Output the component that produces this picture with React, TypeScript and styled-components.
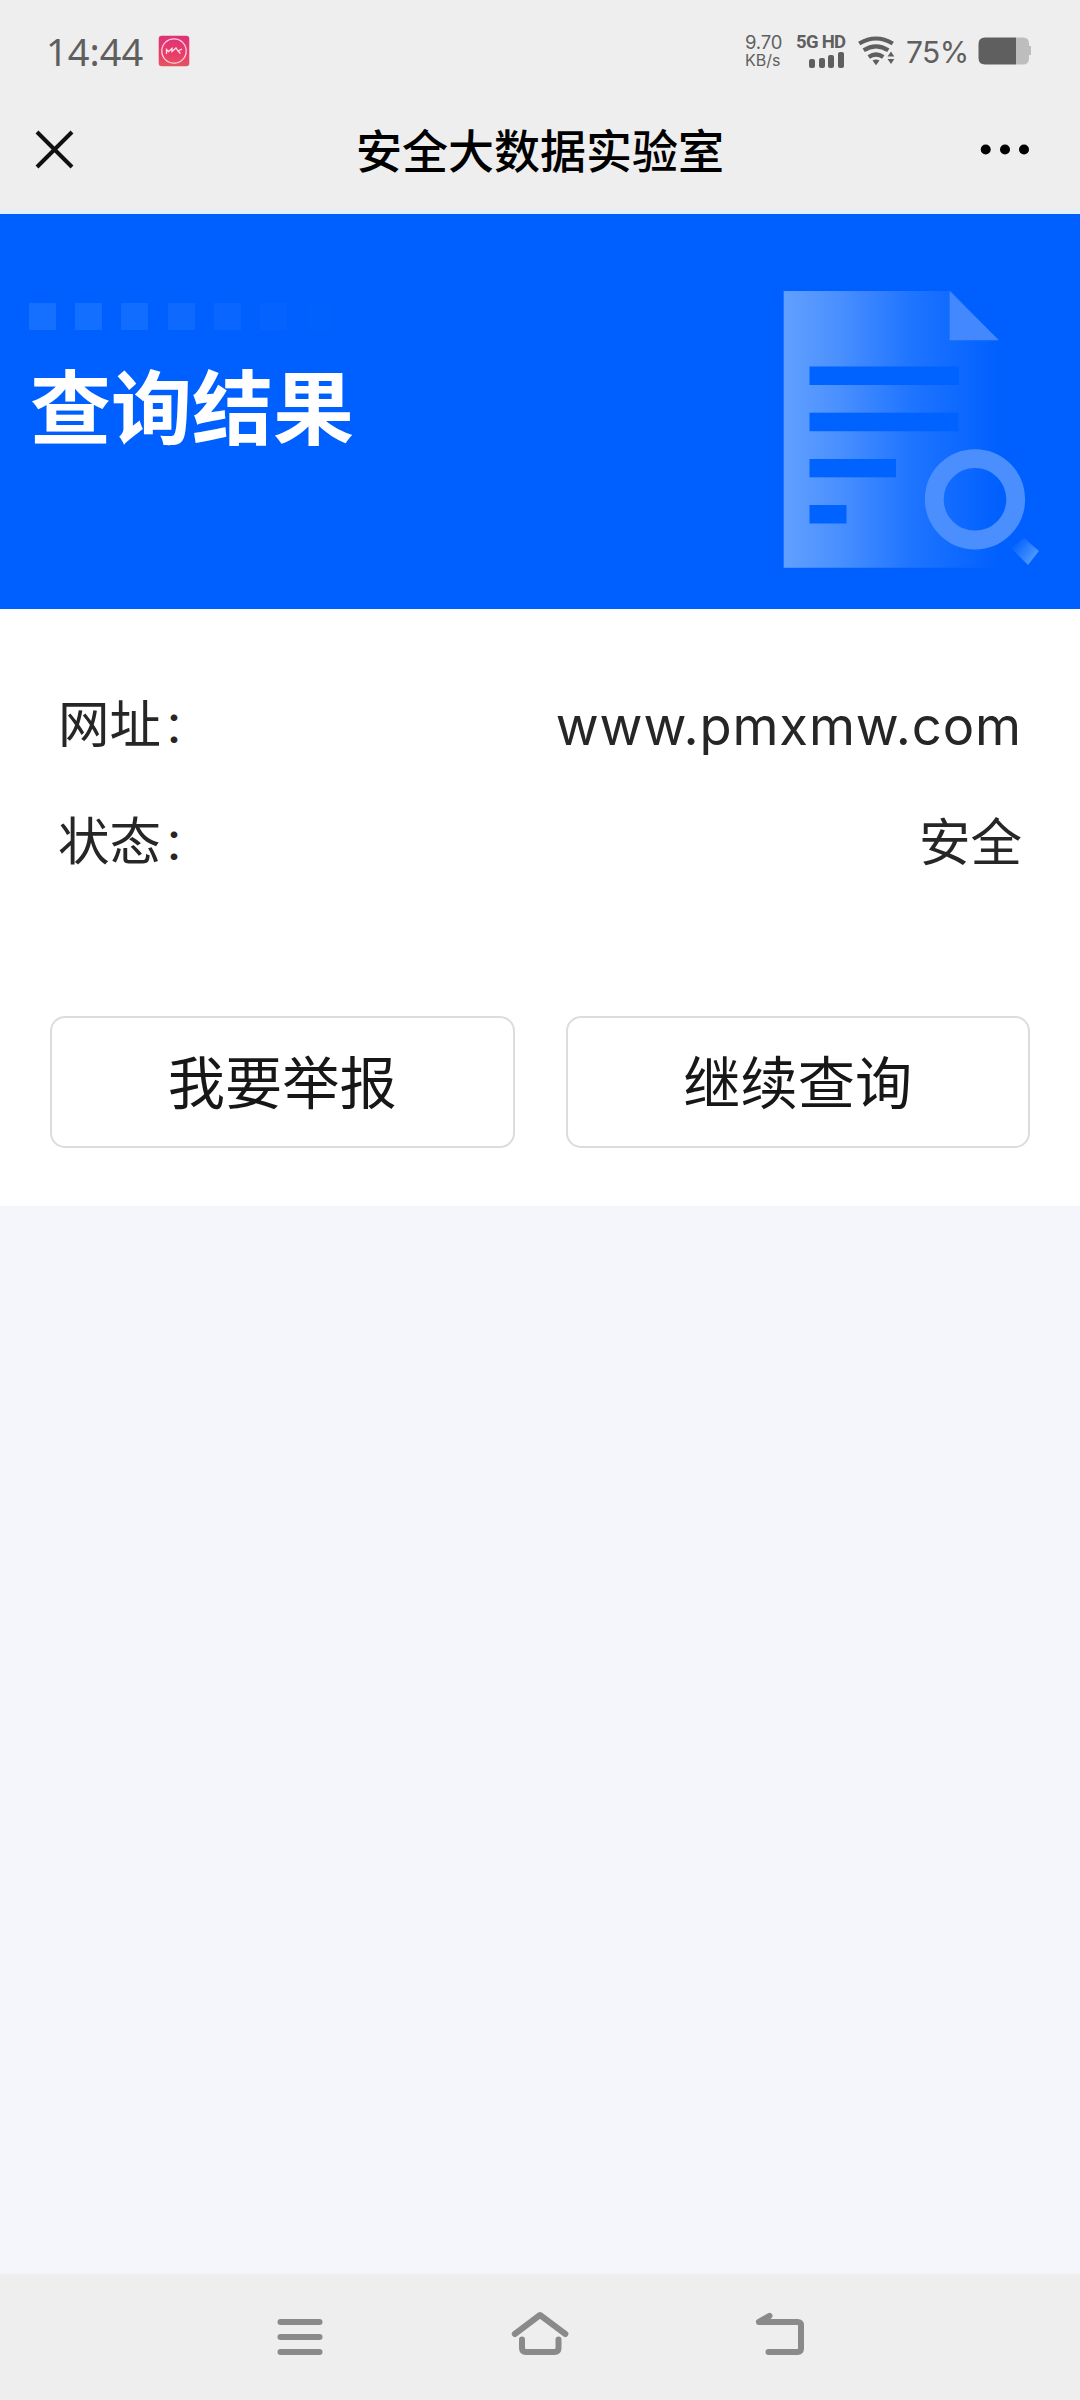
import React from "react";
import styled, { createGlobalStyle } from "styled-components";

const cjk = `"Noto Sans CJK SC", sans-serif`;

const GlobalStyle = createGlobalStyle`
  * { box-sizing: border-box; }
  body { margin: 0; background: #f4f6fb; font-family: ${cjk}; }
  button { font: inherit; border: 0; padding: 0; background: none; }
`;

const Screen = styled.div`
  width: 1080px;
  height: 2400px;
  display: flex;
  flex-direction: column;
  background: #f4f6fb;
  overflow: hidden;
`;

const Header = styled.header`
  height: 214px;
  background: #eeeeee;
  border-bottom: 5px solid #e4eff8;
  color: #5f5f5f;
`;

const StatusBar = styled.div`
  height: 102px;
  padding: 0 48px 0 46px;
  display: flex;
  align-items: center;
  justify-content: space-between;
`;

const StatusGroup = styled.div`
  display: flex;
  align-items: center;
`;

const Clock = styled.span`
  width: 112px;
  font: 400 38px/40px "Noto Sans", sans-serif;
`;

const Speed = styled.div`
  width: 51px;
  display: flex;
  flex-direction: column;
  gap: 2px;
  font-family: Inter, sans-serif;
  white-space: nowrap;
`;

const SpeedLine = styled.span<{ $size: number; $gap: number }>`
  font-size: ${(p) => p.$size}px;
  line-height: 16px;
  letter-spacing: ${(p) => p.$gap}px;
`;

const Network = styled.div`
  width: 61px;
  display: flex;
  flex-direction: column;
`;

const NetworkLabel = styled.span`
  font: 700 18.5px/16px Roboto, sans-serif;
  letter-spacing: -0.7px;
  white-space: nowrap;
`;

const SignalBars = styled.div`
  height: 18px;
  display: flex;
  align-items: flex-end;
  gap: 3.6px;
  padding-left: 13px;
`;

const SignalBar = styled.span<{ $height: number }>`
  width: 6px;
  height: ${(p) => p.$height}px;
  border-radius: 2px;
  background: #5f5f5f;
`;

const Percent = styled.span`
  width: 83px;
  padding: 2px 0 0 11px;
  font: 400 30px/36px Inter, sans-serif;
  letter-spacing: -0.6px;
`;

const Drawing = styled.svg`
  display: block;
  flex: none;
`;

const TitleBar = styled.div`
  height: 96px;
  padding: 0 30px;
  display: flex;
  align-items: center;
  justify-content: space-between;
`;

const Title = styled.h1`
  margin: 0;
  padding-bottom: 4px;
  font: 500 46px/60px ${cjk};
  color: #000;
`;

const BarButton = styled.button`
  width: 70px;
  height: 50px;
  display: flex;
  align-items: center;
`;

const Banner = styled.section`
  height: 395px;
  padding: 76px 40px 0 29px;
  display: flex;
  justify-content: space-between;
  background: #0060ff;
`;

const BannerText = styled.div`
  padding-top: 13px;
`;

const Squares = styled.div`
  display: flex;
  gap: 19.2px;
`;

const Square = styled.span<{ $alpha: number }>`
  width: 27px;
  height: 27px;
  background: rgba(70, 150, 255, ${(p) => p.$alpha});
`;

const Heading = styled.h2`
  margin: 15px 0 0 1px;
  font: 700 81px/116px ${cjk};
  color: #fff;
`;

const Panel = styled.section`
  height: 597px;
  padding: 58px 50px 0;
  background: #fff;
`;

const Row = styled.div`
  height: 117px;
  padding: 0 8px;
  display: flex;
  align-items: center;
  justify-content: space-between;
  color: #262626;
`;

const Label = styled.span`
  padding-bottom: 7px;
  font: 400 51.5px/74px ${cjk};
`;

const Colon = styled.span`
  margin-left: 2px;
  font-size: 44px;
`;

const Value = styled.span`
  padding-bottom: 7px;
  font: 400 51.5px/74px ${cjk};
`;

const UrlValue = styled.span`
  font: 400 52.5px/74px Inter, sans-serif;
  letter-spacing: 0.9px;
`;

const Actions = styled.div`
  display: grid;
  grid-template-columns: 1fr 1fr;
  gap: 51px;
  margin-top: 115px;
`;

const ActionButton = styled.button`
  height: 132px;
  padding-bottom: 7px;
  border: 2px solid #dcdcdc;
  border-radius: 15px;
  background: #fff;
  color: #171717;
  font: 400 57.2px/82px ${cjk};
`;

const Blank = styled.div`
  flex: 1;
`;

const SystemNav = styled.nav`
  height: 126px;
  padding: 36px 270px 0;
  display: flex;
  justify-content: space-between;
  background: #eeeeee;
`;

const squares = [0.3, 0.27, 0.24, 0.2, 0.13, 0.05, 0.02];
const signal = [9, 10, 13, 16];

function AppBadge() {
  return (
    <Drawing width="32" height="32" viewBox="0 0 32 32">
      <defs>
        <linearGradient id="badge" x1="0" y1="0" x2="0" y2="1">
          <stop offset="0" stopColor="#dc3378" />
          <stop offset="0.6" stopColor="#e93c69" />
          <stop offset="1" stopColor="#e35561" />
        </linearGradient>
      </defs>
      <rect x="0.7" y="0.7" width="30.6" height="30.6" rx="3" fill="url(#badge)" />
      <circle cx="16" cy="16" r="12.2" fill="none" stroke="#ffd0dc" strokeWidth="1.3" />
      <path d="M8.500 19V14.500L10.500 16.500L14 13.500V16.500L18 13L20 16L24 14M19.500 15.500L22.500 18.500" fill="none" stroke="#ffe3ea" strokeWidth="1.3" />
    </Drawing>
  );
}

function WifiIcon() {
  return (
    <Drawing width="38" height="32" viewBox="857 36 38 32">
      <g fill="none" stroke="#5f5f5f" strokeWidth="4.200">
        <path d="M859.200 44.500Q876 34.500 892.800 44.500" />
        <path d="M863.700 51.300Q876 43.300 888.300 51.300" />
        <path d="M868.700 58Q876 53 883.300 58" />
      </g>
      <path d="M872.500 61.600Q876 59.400 879.500 61.600L876 66.200Z" fill="#5f5f5f" />
      <path d="M887.500 57.500L891 52.500L894.300 57.500ZM887.500 60L891 65L894.300 60Z" fill="#5f5f5f" />
    </Drawing>
  );
}

function BatteryIcon() {
  return (
    <Drawing width="54" height="28" viewBox="0 0 54 28">
      <path d="M38 0.500H45Q51 0.500 51 6.500V9H53V18H51V21.500Q51 27.500 45 27.500H38Z" fill="#bdbdbd" />
      <path d="M38 0.500H7Q0.500 0.500 0.500 7V21Q0.500 27.500 7 27.500H38Z" fill="#5f5f5f" />
    </Drawing>
  );
}

function ReportArt() {
  return (
    <Drawing width="260" height="280" viewBox="780 290 260 280">
      <defs>
        <linearGradient id="page" x1="0" y1="0" x2="1" y2="0">
          <stop offset="0" stopColor="#62a0ff" />
          <stop offset="0.25" stopColor="#4a90ff" />
          <stop offset="0.6" stopColor="#1e74ff" />
          <stop offset="1" stopColor="#0060ff" />
        </linearGradient>
        <linearGradient id="handle" gradientUnits="userSpaceOnUse" x1="1014" y1="542" x2="1034" y2="558">
          <stop offset="0" stopColor="#0060ff" />
          <stop offset="1" stopColor="#4c96ff" />
        </linearGradient>
      </defs>
      <path d="M783.700 291H951L999 340V567.700H783.700Z" fill="url(#page)" />
      <path d="M949.600 291V340.300H999Z" fill="#4388ff" />
      <g fill="#0062ff">
        <rect x="809.500" y="366.500" width="149.500" height="18.500" />
        <rect x="809.500" y="412.700" width="149" height="18.500" />
        <rect x="809.500" y="459" width="86.500" height="18.300" />
        <rect x="809.500" y="505" width="37" height="18.500" />
      </g>
      <circle cx="975" cy="499.300" r="40.700" fill="none" stroke="#4b8fff" strokeWidth="18.800" />
      <path d="M1011 548L1024 538L1039 551L1028 565Z" fill="url(#handle)" />
    </Drawing>
  );
}

export default function App() {
  return (
    <Screen>
      <GlobalStyle />
      <Header>
        <StatusBar>
          <StatusGroup>
            <Clock>14:44</Clock>
            <AppBadge />
          </StatusGroup>
          <StatusGroup>
            <Speed>
              <SpeedLine $size={18.5} $gap={-0.2}>9.70</SpeedLine>
              <SpeedLine $size={16} $gap={0}>KB/s</SpeedLine>
            </Speed>
            <Network>
              <NetworkLabel>5G HD</NetworkLabel>
              <SignalBars>
                {signal.map((h) => (
                  <SignalBar key={h} $height={h} />
                ))}
              </SignalBars>
            </Network>
            <WifiIcon />
            <Percent>75%</Percent>
            <BatteryIcon />
          </StatusGroup>
        </StatusBar>
        <TitleBar>
          <BarButton aria-label="关闭">
            <Drawing width="50" height="50" viewBox="0 0 50 50">
              <path d="M7 7L42 42M42 7L7 42" stroke="#111" strokeWidth="4" />
            </Drawing>
          </BarButton>
          <Title>安全大数据实验室</Title>
          <BarButton aria-label="更多">
            <Drawing width="55" height="50" viewBox="0 0 55 50" fill="#000">
              <circle cx="5.700" cy="24.500" r="5" />
              <circle cx="25" cy="24.500" r="5" />
              <circle cx="44" cy="24.500" r="5" />
            </Drawing>
          </BarButton>
        </TitleBar>
      </Header>
      <Banner>
        <BannerText>
          <Squares>
            {squares.map((a) => (
              <Square key={a} $alpha={a} />
            ))}
          </Squares>
          <Heading>查询结果</Heading>
        </BannerText>
        <ReportArt />
      </Banner>
      <Panel>
        <Row>
          <Label>
            网址<Colon>：</Colon>
          </Label>
          <UrlValue>www.pmxmw.com</UrlValue>
        </Row>
        <Row>
          <Label>
            状态<Colon>：</Colon>
          </Label>
          <Value>安全</Value>
        </Row>
        <Actions>
          <ActionButton>我要举报</ActionButton>
          <ActionButton>继续查询</ActionButton>
        </Actions>
      </Panel>
      <Blank />
      <SystemNav>
        <Drawing width="60" height="50" viewBox="270 2310 60 50">
          <path d="M280.500 2322H319.500M280.500 2337H319.500M280.500 2352H319.500" stroke="#8a8a8a" strokeWidth="6" strokeLinecap="round" />
        </Drawing>
        <Drawing width="60" height="50" viewBox="510 2310 60 50">
          <g fill="none" stroke="#8a8a8a" strokeWidth="6" strokeLinecap="round" strokeLinejoin="round">
            <path d="M514.800 2334L540 2315L565.400 2334" />
            <path d="M522 2339.500V2348Q522 2352 526 2352H554.500Q558.500 2352 558.500 2348V2339.500" />
          </g>
        </Drawing>
        <Drawing width="60" height="50" viewBox="750 2310 60 50">
          <path d="M759 2322H797.500Q801 2322 801 2325.500V2348.500Q801 2352 797.500 2352H768.500M759 2321.800L769.500 2315.800" fill="none" stroke="#8a8a8a" strokeWidth="6" strokeLinecap="round" />
          <path d="M759 2321L770 2316L771 2321Z" fill="#8a8a8a" />
        </Drawing>
      </SystemNav>
    </Screen>
  );
}
